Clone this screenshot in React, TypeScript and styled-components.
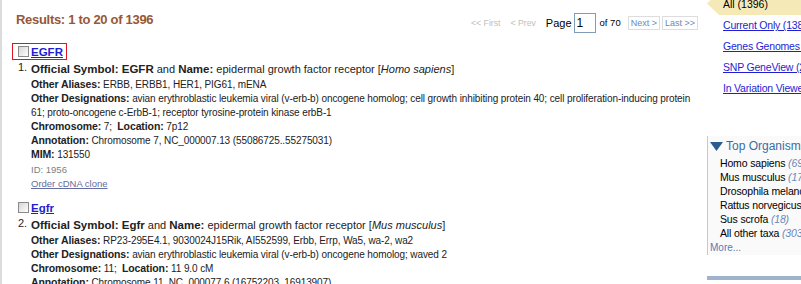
import styled, { createGlobalStyle } from 'styled-components';

const GlobalStyle = createGlobalStyle`
  html, body {
    margin: 0;
    padding: 0;
    background: #fff;
    overflow: hidden;
  }
  body {
    width: 801px;
    height: 284px;
    font-family: "Liberation Sans", Arial, sans-serif;
    color: #000;
  }
`;

const Page = styled.div`
  display: flex;
  width: 1000px;
  height: 284px;
`;

const Main = styled.div`
  flex: 0 0 704px;
  box-sizing: border-box;
  border-left: 2px solid #dcdcdc;
  padding: 0 6px 0 14px;
`;

const TopBar = styled.div`
  display: flex;
  justify-content: space-between;
  align-items: center;
  height: 43px;
  padding-top: 2px;
  box-sizing: border-box;
`;

const ResultCount = styled.h2`
  margin: -6px 0 0;
  font-size: 13px;
  letter-spacing: -0.3px;
  font-weight: bold;
  color: #985735;
`;

const Pager = styled.div`
  display: flex;
  align-items: center;
`;

const PagerDisabled = styled.span`
  font-size: 8.7px;
  color: #c0c0c0;
  margin-right: 10px;
`;

const PageLabel = styled.span<{ $small?: boolean }>`
  font-size: ${(p) => (p.$small ? '9.5px' : '11px')};
  margin-right: 2px;
`;

const PageInput = styled.input`
  width: 22px;
  height: 20px;
  box-sizing: border-box;
  border: 1px solid #7f9db9;
  padding: 0 2px;
  font: 12px "Liberation Sans", Arial, sans-serif;
  margin-right: 4px;
`;

const PageButton = styled.span<{ $first?: boolean }>`
  display: inline-block;
  height: 14px;
  line-height: 13px;
  box-sizing: border-box;
  border: 1px solid #ddd;
  padding: 0 2px;
  font-size: 9px;
  color: #6d8ab8;
  margin-left: ${(p) => (p.$first ? '5px' : '2px')};
`;

const Item = styled.div`
  margin-bottom: 8px;
`;

const TitleRow = styled.div<{ $focused?: boolean }>`
  display: inline-flex;
  align-items: center;
  height: 17px;
  box-sizing: border-box;
  margin-left: -4px;
  padding: 0 3px 0 5px;
  border: 1px solid ${(p) => (p.$focused ? '#e0141e' : 'transparent')};
`;

const Check = styled.span`
  width: 11px;
  height: 11px;
  box-sizing: border-box;
  border: 1px solid #8a8a8a;
  background: linear-gradient(135deg, #d6d6d6, #fff);
  margin-right: 2px;
`;

const TitleLink = styled.a`
  font-size: 11.5px;
  font-weight: bold;
  color: #1e1ed2;
  text-decoration: underline;
`;

const Body = styled.div`
  display: flex;
  padding-left: 2px;
`;

const Num = styled.span`
  flex: 0 0 13px;
  font-size: 11px;
  line-height: 13px;
  color: #222;
`;

const Details = styled.div`
  flex: 0 0 665px;
`;

const Summary = styled.div`
  font-size: 11px;
  line-height: 17px;
  color: #222;

  b {
    font-size: 11.5px;
    line-height: 1;
  }
`;

const Line = styled.div`
  font-size: 10px;
  letter-spacing: -0.1px;
  line-height: 14px;
  color: #222;
`;

const Label = styled.b`
  font-size: 10.5px;
  line-height: 1;
  letter-spacing: -0.1px;
`;

const IdLine = styled.div`
  font-size: 9.5px;
  line-height: 15px;
  color: #808080;
`;

const SubLink = styled.a`
  display: block;
  font-size: 9.5px;
  line-height: 14px;
  color: #646ca0;
  text-decoration: underline;
`;

const Sidebar = styled.div`
  flex: 0 0 240px;
  margin-top: -8px;
  padding-left: 3px;
  font-size: 10.5px;
`;

const ActiveTab = styled.div`
  height: 23px;
  line-height: 25px;
  padding-left: 16px;
  background: #f6e9b8;
  clip-path: polygon(12px 0, 100% 0, 100% 100%, 12px 100%, 0 50%);
`;

const FilterLink = styled.a`
  display: block;
  height: 21px;
  line-height: 21px;
  padding-left: 16px;
  letter-spacing: -0.2px;
  color: #1e1ed2;
  text-decoration: underline;
  white-space: nowrap;
`;

const OrgBox = styled.div`
  margin-top: 37px;
  border-left: 1px solid #c8c8c8;
  background: #fafafa;
`;

const OrgHeader = styled.div`
  display: flex;
  align-items: center;
  height: 20px;
  padding-left: 2px;
  font-size: 12px;
  color: #3b6da6;
  white-space: nowrap;
`;

const Triangle = styled.svg`
  width: 13px;
  height: 9px;
  margin-right: 3px;
`;

const OrgItem = styled.div`
  height: 14px;
  line-height: 14px;
  padding-left: 12px;
  letter-spacing: -0.15px;
  white-space: nowrap;
`;

const OrgCount = styled.i`
  color: #6b87b8;
`;

const More = styled.div`
  height: 15px;
  line-height: 15px;
  padding-left: 2px;
  font-size: 10px;
  color: #5a7bb3;
`;

const BottomBar = styled.div`
  margin-top: 21px;
  height: 4px;
  background: #9fb4cc;
`;

const organisms = [
  ['Homo sapiens', '(695)'],
  ['Mus musculus', '(175)'],
  ['Drosophila melanogaster', '(30)'],
  ['Rattus norvegicus', '(27)'],
  ['Sus scrofa', '(18)'],
  ['All other taxa', '(303)'],
];

export default function App() {
  return (
    <>
      <GlobalStyle />
      <Page>
        <Main>
          <TopBar>
            <ResultCount>Results: 1 to 20 of 1396</ResultCount>
            <Pager>
              <PagerDisabled>&lt;&lt; First</PagerDisabled>
              <PagerDisabled>&lt; Prev</PagerDisabled>
              <PageLabel>Page</PageLabel>
              <PageInput defaultValue="1" />
              <PageLabel $small>of 70</PageLabel>
              <PageButton $first>Next &gt;</PageButton>
              <PageButton>Last &gt;&gt;</PageButton>
            </Pager>
          </TopBar>

          <Item>
            <TitleRow $focused>
              <Check />
              <TitleLink>EGFR</TitleLink>
            </TitleRow>
            <Body>
              <Num>1.</Num>
              <Details>
                <Summary>
                  <b>Official Symbol: EGFR</b> and <b>Name:</b> epidermal growth factor receptor [
                  <i>Homo sapiens</i>]
                </Summary>
                <Line>
                  <Label>Other Aliases:</Label> ERBB, ERBB1, HER1, PIG61, mENA
                </Line>
                <Line>
                  <Label>Other Designations:</Label> avian erythroblastic leukemia viral (v-erb-b)
                  oncogene homolog; cell growth inhibiting protein 40; cell proliferation-inducing
                  protein 61; proto-oncogene c-ErbB-1; receptor tyrosine-protein kinase erbB-1
                </Line>
                <Line>
                  <Label>Chromosome:</Label> 7;&nbsp; <Label>Location:</Label> 7p12
                </Line>
                <Line>
                  <Label>Annotation:</Label> Chromosome 7, NC_000007.13 (55086725..55275031)
                </Line>
                <Line>
                  <Label>MIM:</Label> 131550
                </Line>
                <IdLine>ID: 1956</IdLine>
                <SubLink>Order cDNA clone</SubLink>
              </Details>
            </Body>
          </Item>

          <Item>
            <TitleRow>
              <Check />
              <TitleLink>Egfr</TitleLink>
            </TitleRow>
            <Body>
              <Num>2.</Num>
              <Details>
                <Summary>
                  <b>Official Symbol: Egfr</b> and <b>Name:</b> epidermal growth factor receptor [
                  <i>Mus musculus</i>]
                </Summary>
                <Line>
                  <Label>Other Aliases:</Label> RP23-295E4.1, 9030024J15Rik, AI552599, Erbb, Errp,
                  Wa5, wa-2, wa2
                </Line>
                <Line>
                  <Label>Other Designations:</Label> avian erythroblastic leukemia viral (v-erb-b)
                  oncogene homolog; waved 2
                </Line>
                <Line>
                  <Label>Chromosome:</Label> 11;&nbsp; <Label>Location:</Label> 11 9.0 cM
                </Line>
                <Line>
                  <Label>Annotation:</Label> Chromosome 11, NC_000077.6 (16752203..16913907)
                </Line>
              </Details>
            </Body>
          </Item>
        </Main>

        <Sidebar>
          <ActiveTab>All (1396)</ActiveTab>
          <FilterLink>Current Only (1389)</FilterLink>
          <FilterLink>Genes Genomes (12)</FilterLink>
          <FilterLink>SNP GeneView (26)</FilterLink>
          <FilterLink>In Variation Viewer (3)</FilterLink>

          <OrgBox>
            <OrgHeader>
              <Triangle viewBox="0 0 13 9">
                <polygon points="0,0 13,0 6.5,9" fill="#2b5c90" />
              </Triangle>
              Top Organisms
            </OrgHeader>
            {organisms.map(([name, count]) => (
              <OrgItem key={name}>
                {name} <OrgCount>{count}</OrgCount>
              </OrgItem>
            ))}
            <More>More...</More>
          </OrgBox>
          <BottomBar />
        </Sidebar>
      </Page>
    </>
  );
}
